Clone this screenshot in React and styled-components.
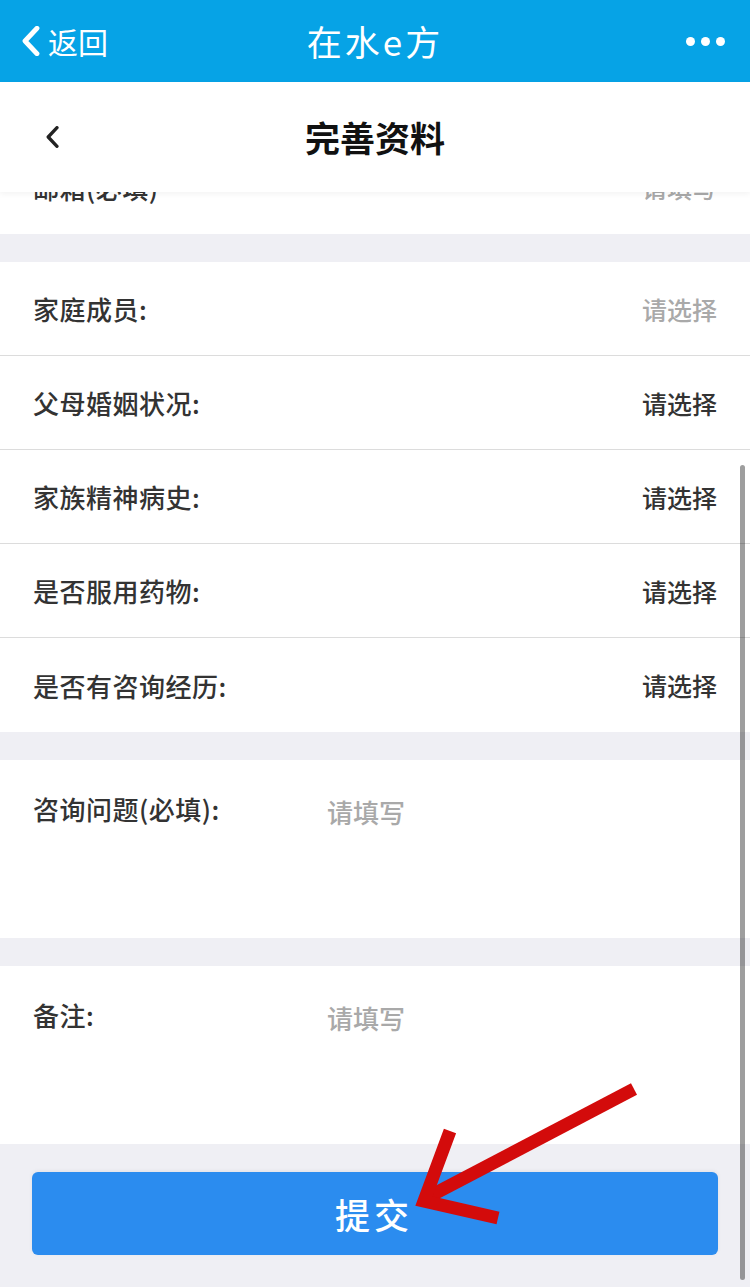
import styled, { createGlobalStyle } from 'styled-components';

const GlobalStyle = createGlobalStyle`
  html, body {
    margin: 0;
    padding: 0;
    background: #efeff4;
  }
  body {
    font-family: "Noto Sans CJK SC", "Liberation Sans", sans-serif;
  }
`

const Page = styled.div`
position: relative;
width: 750px;
height: 1287px;
overflow: hidden;
display: flex;
flex-direction: column;
background: #efeff4;
`

const TopBar = styled.div`
height: 82px;
flex-shrink: 0;
background: #06a3e6;
display: flex;
align-items: center;
justify-content: space-between;
padding: 0 22px;
color: #fff;
position: relative;
`

const BackLink = styled.div`
display: flex;
align-items: center;
gap: 8px;
font-size: 30px;
line-height: 1;
`

const AppTitle = styled.div`
position: absolute;
left: 0;
right: 0;
text-align: center;
font-size: 35px;
letter-spacing: 3px;
line-height: 82px;
pointer-events: none;
`

const Dots = styled.div`
display: flex;
gap: 6px;
padding-right: 3px;
span {
  width: 9px;
  height: 9px;
  border-radius: 50%;
  background: #fff;
}
`

const Header = styled.div`
height: 110px;
flex-shrink: 0;
background: #fff;
display: flex;
align-items: center;
position: relative;
z-index: 2;
box-shadow: 0 2px 6px rgba(0,0,0,0.05);
`

const HeaderBack = styled.div`
width: 100px;
padding-left: 46px;
display: flex;
align-items: center;
`

const HeaderTitle = styled.div`
position: absolute;
left: 0;
right: 0;
text-align: center;
font-size: 35px;
font-weight: 700;
color: #111;
line-height: 110px;
`

const Clip = styled.div`
height: 42px;
flex-shrink: 0;
overflow: hidden;
background: #fff;
`

const Gap = styled.div`
height: 28px;
flex-shrink: 0;
`

const Group = styled.div`
background: #fff;
display: flex;
flex-direction: column;
`

const Row = styled.div`
height: 94px;
box-sizing: border-box;
display: flex;
align-items: center;
justify-content: space-between;
padding: 0 33px;
border-bottom: ${p => (p.$last ? 'none' : '1px solid #dcdcdc')};
margin-top: ${p => (p.$offset ? `-${p.$offset}px` : '0')};
`

const Label = styled.span`
font-size: 26px;
font-weight: 500;
letter-spacing: 0.5px;
color: #333;
`

const Value = styled.span`
font-size: 25px;
font-weight: 500;
color: ${p => (p.$muted ? '#a9a9a9' : '#333')};
`

const TextBlock = styled.div`
height: 178px;
flex-shrink: 0;
background: #fff;
display: grid;
grid-template-columns: 294px 1fr;
padding: 30px 33px 0;
box-sizing: border-box;
`

const Placeholder = styled.span`
font-size: 26px;
font-weight: 500;
color: #a9a9a9;
padding-top: 3px;
`

const Footer = styled.div`
flex: 1;
padding: 28px 32px 0;
`

const SubmitButton = styled.button`
width: 100%;
height: 83px;
border: none;
border-radius: 6px;
background: #2b8cef;
color: #fff;
font-family: inherit;
font-size: 35px;
font-weight: 500;
letter-spacing: 4px;
padding-left: 4px;
box-shadow: 0 -1px 4px rgba(0,0,0,0.06);
`

const Scrollbar = styled.div`
position: absolute;
right: 5px;
top: 465px;
width: 5px;
height: 815px;
border-radius: 3px;
background: rgba(0,0,0,0.38);
`

const Annotation = styled.svg`
position: absolute;
left: 410px;
top: 1075px;
pointer-events: none;
`

const Chevron = ({ size = 20, color = '#fff', width = 3.5 }) => (
  <svg width={size * 0.6} height={size} viewBox="0 0 12 20">
    <path d="M10 1.5 L2 10 L10 18.5" fill="none" stroke={color} strokeWidth={width} strokeLinecap="round" strokeLinejoin="round" />
  </svg>
)

const selectRows = [
  { label: '家庭成员:', muted: true },
  { label: '父母婚姻状况:' },
  { label: '家族精神病史:' },
  { label: '是否服用药物:' },
  { label: '是否有咨询经历:' },
]

export default function App() {
  return (
    <Page>
      <GlobalStyle />
      <TopBar>
        <BackLink>
          <Chevron size={30} width={3.2} />
          <span>返回</span>
        </BackLink>
        <AppTitle>在水e方</AppTitle>
        <Dots><span /><span /><span /></Dots>
      </TopBar>

      <Header>
        <HeaderBack>
          <Chevron size={22} color="#222" width={3} />
        </HeaderBack>
        <HeaderTitle>完善资料</HeaderTitle>
      </Header>

      {/* row scrolled mostly under the header */}
      <Clip>
        <Row $last $offset={52}>
          <Label>邮箱(必填)</Label>
          <Value $muted>请填写</Value>
        </Row>
      </Clip>
      <Gap />

      <Group>
        {selectRows.map((r, i) => (
          <Row key={r.label} $last={i === selectRows.length - 1}>
            <Label>{r.label}</Label>
            <Value $muted={r.muted}>请选择</Value>
          </Row>
        ))}
      </Group>
      <Gap />

      <TextBlock>
        <Label>咨询问题(必填):</Label>
        <Placeholder>请填写</Placeholder>
      </TextBlock>
      <Gap />

      <TextBlock>
        <Label>备注:</Label>
        <Placeholder>请填写</Placeholder>
      </TextBlock>

      <Footer>
        <SubmitButton>提交</SubmitButton>
      </Footer>

      <Scrollbar />
      <Annotation width="240" height="160" viewBox="0 0 240 160">
        <g stroke="#d30b0b" strokeWidth="13" fill="none" strokeLinejoin="miter">
          <line x1="224" y1="14" x2="20" y2="121" />
          <polyline points="40,56 14,126 88,143" />
        </g>
      </Annotation>
    </Page>
  )
}
